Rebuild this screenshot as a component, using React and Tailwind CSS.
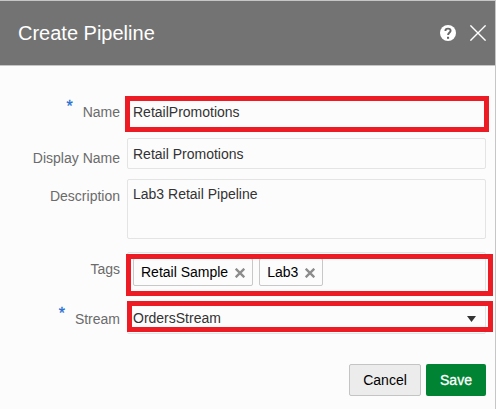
import React from 'react';

function Label({ required, children, className = '' }) {
  return (
    <div className={`flex w-[120px] shrink-0 justify-end text-[#6b6b6b] ${className}`}>
      {required && <span className="-mt-[5px] mr-[10px] text-[16px] text-[#1f6fd0] [-webkit-text-stroke:0.3px_#1f6fd0]">*</span>}
      <span>{children}</span>
    </div>
  );
}

function Highlight({ className }) {
  return <div className={`pointer-events-none absolute border-5 border-[#ed1c24] ${className}`} />;
}

function Chip({ children }) {
  return (
    <span className="flex h-[28px] items-center rounded-[2px] border border-[#c8c8c8] pr-[7px] pl-[7px] text-black">
      {children}
      <svg className="mt-[2px] ml-[7px] h-[10px] w-[10px]" viewBox="0 0 10 10" stroke="#8c8c8c" strokeWidth="2.3">
        <path d="M0.7 0.7 9.3 9.3M9.3 0.7 0.7 9.3" />
      </svg>
    </span>
  );
}

const field = 'ml-[7px] w-[359px] rounded-[2px] border border-[#e4e4e4] pl-[5px] text-[#333]';

export default function App() {
  return (
    <div className="h-[409px] w-[496px] overflow-hidden border-t border-r border-[#c6c6c6] bg-[#fcfcfc] font-['Liberation_Sans',Arial,sans-serif] text-[14px] leading-4">
      <header className="flex h-[65px] items-center border-b border-[#c6c6c6] bg-[#737373] pr-[9px] pl-[18px] text-white">
        <h1 className="flex-1 text-[20px] leading-6">Create Pipeline</h1>
        <svg className="mr-[14px] h-4 w-4" viewBox="0 0 16 16">
          <circle cx="8" cy="8" r="8" fill="#fff" />
          <path d="M5.4 5.9C5.4 4.4 6.4 3.6 8 3.6s2.6.8 2.6 2.2c0 1.7-2.5 1.9-2.5 4.3" fill="none" stroke="#666" strokeWidth="1.9" />
          <path d="M7 11.8h2.1v2H7z" fill="#666" />
        </svg>
        <svg className="h-4 w-4" viewBox="0 0 16 16" stroke="#fff" strokeWidth="1.4">
          <path d="M0.4 0.4 15.6 15.6M15.6 0.4 0.4 15.6" />
        </svg>
      </header>

      <form>
        <div className="relative mt-[32px] flex h-[31px]">
          <Label required className="pt-[6px]">Name</Label>
          <div className={`${field} pt-[5px]`}>RetailPromotions</div>
          <Highlight className="-top-[2px] left-[125px] h-[36px] w-[364px]" />
        </div>
        <div className="mt-[9px] flex h-[31px]">
          <Label className="pt-[12px]">Display Name</Label>
          <div className={`${field} pt-[7px]`}>Retail Promotions</div>
        </div>
        <div className="mt-[10px] flex h-[60px]">
          <Label className="pt-[9px]">Description</Label>
          <div className={`${field} pt-[6px]`}>Lab3 Retail Pipeline</div>
        </div>
        <div className="relative mt-[13px] flex h-[42px]">
          <Label className="pt-[9px]">Tags</Label>
          <div className={`${field} flex gap-[6px] pt-[5px]`}>
            <Chip>Retail Sample</Chip>
            <Chip>Lab3</Chip>
          </div>
          <Highlight className="top-[2px] left-[126px] h-[42px] w-[367px]" />
        </div>
        <div className="relative mt-[9px] flex h-[31px]">
          <Label required className="pt-[8px]">Stream</Label>
          <div className={`${field} flex justify-between pt-[6px] pr-[9px]`}>
            OrdersStream
            <svg className="mt-[6px] h-[6px] w-[9px]" viewBox="0 0 9 6">
              <path d="M0 0h9L4.5 6z" fill="#333" />
            </svg>
          </div>
          <Highlight className="-top-[2px] left-[127px] h-[31px] w-[366px]" />
        </div>
      </form>

      <footer className="mt-[30px] flex justify-end gap-[5px] pr-[9px]">
        <button className="h-[32px] w-[72px] rounded-[2px] border border-[#c4c4c4] bg-[#ececec] text-black">Cancel</button>
        <button className="h-[32px] w-[60px] rounded-[2px] bg-[#008333] text-white [-webkit-text-stroke:0.3px_white]">Save</button>
      </footer>
    </div>
  );
}
